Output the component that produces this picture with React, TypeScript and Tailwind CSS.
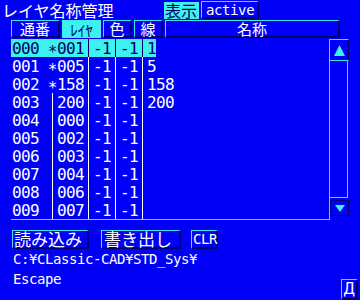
import React from "react";

const rows = [
  { no: "000", mark: "*", layer: "001", color: "-1", line: "-1", name: "1" },
  { no: "001", mark: "*", layer: "005", color: "-1", line: "-1", name: "5" },
  { no: "002", mark: "*", layer: "158", color: "-1", line: "-1", name: "158" },
  { no: "003", mark: "|", layer: "200", color: "-1", line: "-1", name: "200" },
  { no: "004", mark: "|", layer: "000", color: "-1", line: "-1", name: "" },
  { no: "005", mark: "|", layer: "002", color: "-1", line: "-1", name: "" },
  { no: "006", mark: "|", layer: "003", color: "-1", line: "-1", name: "" },
  { no: "007", mark: "|", layer: "004", color: "-1", line: "-1", name: "" },
  { no: "008", mark: "|", layer: "006", color: "-1", line: "-1", name: "" },
  { no: "009", mark: "|", layer: "007", color: "-1", line: "-1", name: "" },
];

const bevel =
  "border-t border-l border-r-2 border-b-2 border-t-[#38e4f0] border-l-[#38e4f0] border-r-[#000070] border-b-[#000070]";

function Sep({ sel }: { sel: boolean }) {
  return (
    <div className="flex w-[9px] justify-center">
      <div className={`w-px ${sel ? "bg-[#000060]" : "bg-white"}`} />
    </div>
  );
}

function Row({ r, sel }: { r: (typeof rows)[number]; sel: boolean }) {
  return (
    <div className={`flex h-[18px] leading-[19px] ${sel ? "text-[#000060]" : "text-white"}`}>
      <div className={`flex w-[145px] ${sel ? "bg-[#3ef0f0]" : ""}`}>
        <div className="w-[37px] pl-px">{r.no}</div>
        {r.mark === "*" ? (
          <div className="w-[9px] text-center">∗</div>
        ) : (
          <Sep sel={sel} />
        )}
        <div className="w-[27px]">{r.layer}</div>
        <Sep sel={sel} />
        <div className="w-[18px]">{r.color}</div>
        <Sep sel={sel} />
        <div className="w-[18px]">{r.line}</div>
        <Sep sel={sel} />
        <div className="w-[9px] whitespace-nowrap">{r.name}</div>
      </div>
    </div>
  );
}

export default function App() {
  return (
    <div className="flex h-[300px] w-[360px] flex-col overflow-hidden bg-[#0000f8] font-['Noto_Sans_CJK_JP',sans-serif] text-white">
      {/* Title */}
      <div className="flex h-[21px] items-start">
        <div className="w-[164px] pl-[2px] text-[16px] leading-[20px]">レイヤ名称管理</div>
        <div className="mt-[2px] flex h-[17px] w-[35px] items-center bg-[#3ef0f0] pl-px text-[16px] leading-[17px] text-[#000060]">
          表示
        </div>
        <div
          className={`mt-[1px] ml-[2px] h-[18px] w-[58px] pl-[4px] font-['DejaVu_Sans_Mono',monospace] text-[14px] leading-[16px] tracking-[-0.4px] ${bevel}`}
        >
          active
        </div>
      </div>

      {/* Header */}
      <div className="flex h-[18px] gap-[2px] pl-[11px] text-[15px] leading-[15px]">
        <div className={`w-[49px] text-center ${bevel}`}>通番</div>
        <div className="flex w-[39px] items-center justify-center bg-[#3ef0f0] text-[#000060]">ﾚｲﾔ</div>
        <div className={`w-[29px] text-center ${bevel}`}>色</div>
        <div className={`w-[29px] text-center ${bevel}`}>線</div>
        <div className={`w-[175px] text-center ${bevel}`}>名称</div>
      </div>

      {/* List + scrollbar */}
      <div className="mt-[1px] flex pl-[11px]">
        <div className="w-[318px] border-b border-[#38e4f0] font-['DejaVu_Sans_Mono',monospace] text-[16px] tracking-[-0.6px]">
          {rows.map((r, i) => (
            <Row key={r.no} r={r} sel={i === 0} />
          ))}
        </div>
        <div className="flex w-[20px] flex-col border-l border-[#38e4f0]">
          <div className="flex h-[22px] items-center justify-center border-t border-r border-b border-t-[#38e4f0] border-b-[#38e4f0] border-r-[#000070]">
            <svg width="11" height="11" viewBox="0 0 11 11">
              <polygon points="5.5,0 11,11 0,11" fill="#3ef0f0" />
            </svg>
          </div>
          <div className="mr-[1px] flex-1 border-r border-b border-[#38e4f0]" />
          <div className="mt-[2px] flex h-[16px] items-center justify-center border border-[#000070]">
            <svg width="10" height="7" viewBox="0 0 10 7">
              <polygon points="0,0 10,0 5,7" fill="#3ef0f0" />
            </svg>
          </div>
          <div className="h-[4px]" />
        </div>
      </div>

      {/* Buttons */}
      <div className="mt-[10px] flex h-[19px] pl-[12px] text-[17px] leading-[16px]">
        <div className={`w-[77px] pl-px ${bevel}`}>読み込み</div>
        <div className={`ml-[12px] w-[80px] pl-[2px] ${bevel}`}>書き出し</div>
        <div
          className={`ml-[10px] w-[27px] pl-[1px] font-['DejaVu_Sans_Mono',monospace] text-[14px] leading-[16px] tracking-[-0.4px] ${bevel}`}
        >
          CLR
        </div>
      </div>

      {/* Path */}
      <div className="h-[21px] pl-[13px] font-['DejaVu_Sans_Mono',monospace] text-[14px] leading-[21px] tracking-[-0.43px]">
        C:¥CLassic-CAD¥STD_Sys¥
      </div>

      {/* Status */}
      <div className="flex flex-1 items-start justify-between pl-[13px]">
        <div className="font-['DejaVu_Sans_Mono',monospace] text-[14px] leading-[18px] tracking-[-0.43px]">Escape</div>
        <div
          className={`mt-[9px] mr-[2px] h-[21px] w-[17px] text-center font-['DejaVu_Sans',sans-serif] text-[15px] leading-[19px] ${bevel}`}
        >
          Д
        </div>
      </div>
    </div>
  );
}
